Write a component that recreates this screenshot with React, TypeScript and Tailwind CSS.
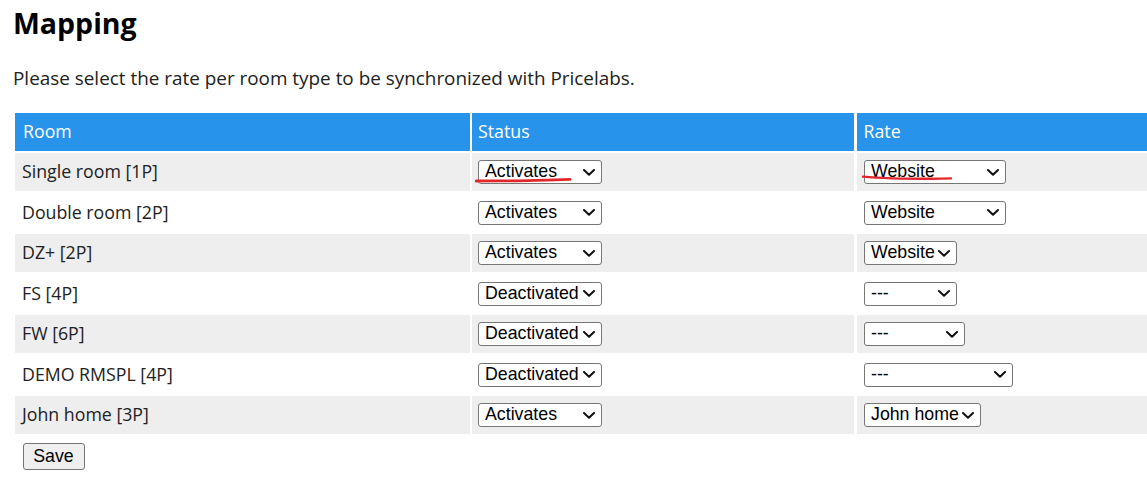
import React from "react";

type Row = {
  room: string;
  status: string;
  rate: string;
  rateW: string;
  marked?: boolean;
};

const rows: Row[] = [
  { room: "Single room [1P]", status: "Activates", rate: "Website", rateW: "w-[142px]", marked: true },
  { room: "Double room [2P]", status: "Activates", rate: "Website", rateW: "w-[142px]" },
  { room: "DZ+ [2P]", status: "Activates", rate: "Website", rateW: "w-[93px]" },
  { room: "FS [4P]", status: "Deactivated", rate: "---", rateW: "w-[93px]" },
  { room: "FW [6P]", status: "Deactivated", rate: "---", rateW: "w-[101px]" },
  { room: "DEMO RMSPL [4P]", status: "Deactivated", rate: "---", rateW: "w-[149px]" },
  { room: "John home [3P]", status: "Activates", rate: "John home", rateW: "w-[117px]" },
];

function Chevron() {
  return (
    <svg width="12" height="7" viewBox="0 0 12 7" className="shrink-0">
      <path d="M1 1 L6 5.8 L11 1" fill="none" stroke="#111" strokeWidth="2" strokeLinecap="round" strokeLinejoin="round" />
    </svg>
  );
}

function FakeSelect({ value, width, mark }: { value: string; width: string; mark?: "status" | "rate" }) {
  return (
    <div className={`relative ${width} h-[24px] shrink-0`}>
      <div className="flex h-full w-full items-center justify-between rounded-[3px] border border-[#767676] bg-white pl-[6px] pr-[6px] font-['Liberation_Sans',Arial,sans-serif] text-[17.75px] leading-none text-black">
        <span className="whitespace-nowrap">{value}</span>
        <Chevron />
      </div>
      {mark === "status" && (
        <svg className="pointer-events-none absolute left-[-3px] top-[16.5px]" width="100" height="6" viewBox="0 0 100 6">
          <path d="M1 4 C 20 3.6, 40 4.2, 60 3.4 C 75 2.8, 88 2.6, 95 2.4" fill="none" stroke="#e3262a" strokeWidth="2.8" strokeLinecap="round" />
        </svg>
      )}
      {mark === "rate" && (
        <svg className="pointer-events-none absolute left-[-2px] top-[15px]" width="92" height="7" viewBox="0 0 92 7">
          <path d="M1 1.6 C 20 3.4, 45 3.8, 70 3.8 C 78 3.8, 84 3.6, 89 3.4" fill="none" stroke="#e3262a" strokeWidth="2.4" strokeLinecap="round" />
        </svg>
      )}
    </div>
  );
}

export default function App() {
  return (
    <div className="min-h-[480px] w-full overflow-hidden bg-white font-['Open_Sans',sans-serif] text-[#212121]">
      <h1 className="pl-[13px] pt-[4px] text-[28.5px] font-bold leading-[38px] text-black">Mapping</h1>
      <p className="mt-[24px] pl-[13px] text-[18.9px] leading-[24px]">
        Please select the rate per room type to be synchronized with Pricelabs.
      </p>
      <div className="ml-[15px] mt-[23px] grid grid-cols-[454.5px_382px_1fr] gap-[2.5px]">
        <div className="flex h-[37.5px] items-center bg-[#2893ea] pl-[8px] text-[17.75px] text-white">Room</div>
        <div className="flex h-[37.5px] items-center bg-[#2893ea] pl-[6px] text-[17.75px] text-white">Status</div>
        <div className="flex h-[37.5px] items-center bg-[#2893ea] pl-[7px] text-[17.75px] text-white">Rate</div>
        {rows.map((r, i) => {
          const bg = i % 2 === 0 ? "bg-[#eeeeee]" : "bg-white";
          return (
            <React.Fragment key={r.room}>
              <div className={`flex h-[38px] items-center ${bg} pb-[1px] pl-[7px] text-[17.75px]`}>{r.room}</div>
              <div className={`flex h-[38px] items-center ${bg} pl-[6px]`}>
                <FakeSelect value={r.status} width="w-[123.5px]" mark={r.marked ? "status" : undefined} />
              </div>
              <div className={`flex h-[38px] items-center ${bg} pl-[7.5px]`}>
                <FakeSelect value={r.rate} width={r.rateW} mark={r.marked ? "rate" : undefined} />
              </div>
            </React.Fragment>
          );
        })}
      </div>
      <div className="mt-[9px] pl-[22.5px]">
        <button className="h-[27px] w-[62px] rounded-[3px] border border-[#767676] bg-[#efefef] font-['Liberation_Sans',Arial,sans-serif] text-[17.75px] leading-none text-black">
          Save
        </button>
      </div>
    </div>
  );
}
